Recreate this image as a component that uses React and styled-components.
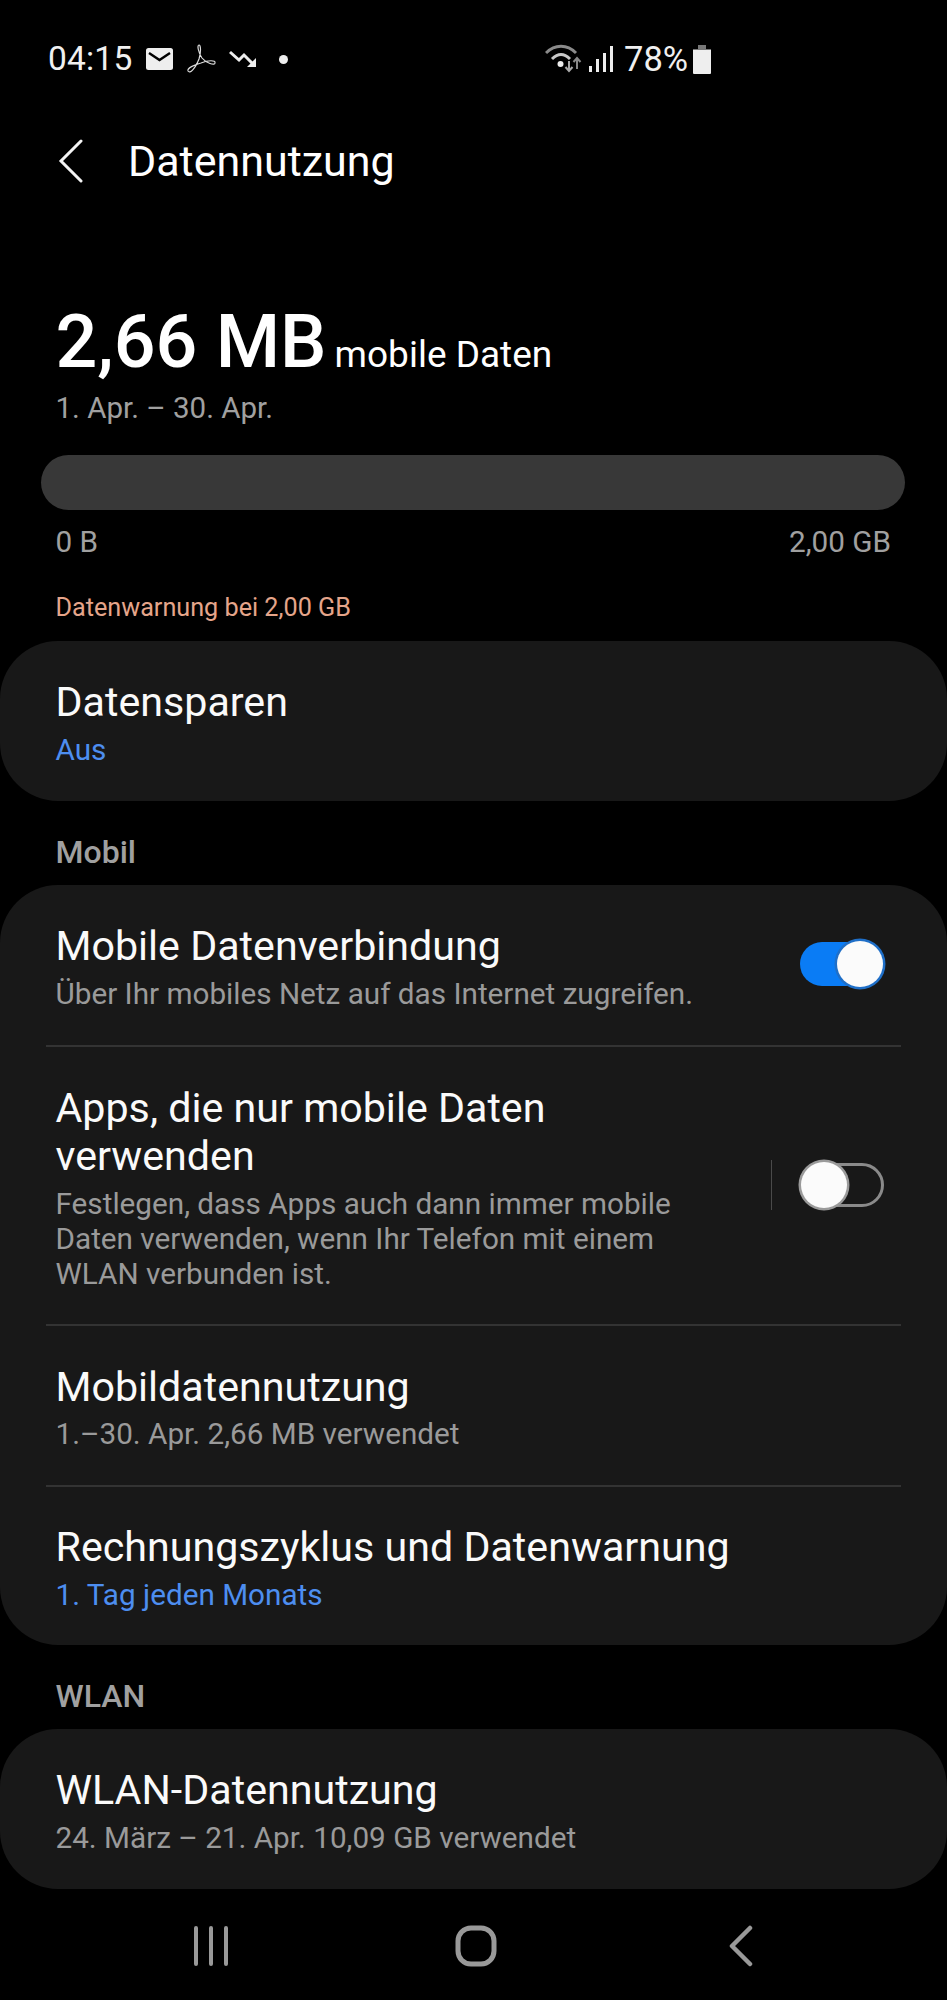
import React from "react";
import styled, { createGlobalStyle } from "styled-components";

const Global = createGlobalStyle`
  html, body { margin: 0; padding: 0; background: #000; }
  body { font-family: Roboto, "Liberation Sans", sans-serif; }
`;

const Page = styled.div`
  width: 947px; height: 2000px; background: #000; color: #fff; overflow: hidden;
  display: flex; flex-direction: column;
`;
const StatusBar = styled.div`
  height: 116px; box-sizing: border-box; padding: 37px 0 0 48px;
  display: flex; align-items: flex-start; font-size: 33.5px; line-height: 44px; color: #f0f0f0;
`;
const StatusLeft = styled.div`display: flex; align-items: center; height: 44px; width: 497px;`;
const StatusRight = styled.div`display: flex; align-items: center; height: 44px; font-size: 34.5px;`;
const Clock = styled.span`margin-right: 13px; letter-spacing: 0.2px;`;
const Header = styled.div`
  height: 90px; display: flex; align-items: center; padding-left: 58px;
`;
const HeaderTitle = styled.h1`
  margin: 0 0 0 44px; font-size: 43px; font-weight: 400; line-height: 56px;
`;
const Summary = styled.div`padding: 92px 55.5px 0; `;
const Amount = styled.div`display: flex; align-items: baseline; gap: 8px; height: 88px;`;
const AmountValue = styled.span`font-size: 73.6px; font-weight: 500; line-height: 88px;`;
const AmountUnit = styled.span`font-size: 37px; line-height: 44px;`;
const Period = styled.div`font-size: 29.5px; line-height: 40px; color: #a0a0a0; margin-top: 2px;`;
const BarTrack = styled.div`
  height: 55px; margin: 27px 42px 0 41px; border-radius: 28px; background: #383838; 
`;
const Scale = styled.div`
  display: flex; justify-content: space-between; padding: 12px 56px 0 55.5px;
  font-size: 29.7px; line-height: 40px; color: #a0a0a0;
`;
const Warning = styled.div`
  padding: 28px 55.5px 0; font-size: 25.2px; line-height: 36px; color: #e5a58a;
`;
const Card = styled.section`
  background: #181818; border-radius: 58px; margin-top: ${(p) => p.$top || 0}px;
  display: flex; flex-direction: column;
`;
const SectionLabel = styled.div`
  padding: 31px 55.5px 0; height: 53px; font-size: 32px; font-weight: 500; line-height: 40px; color: #a0a0a0;
`;
const Row = styled.div`
  height: ${(p) => p.$h}px; box-sizing: border-box; padding: 3px 63px 0 55.5px;
  display: flex; align-items: center; justify-content: space-between;
`;
const RowText = styled.div`display: flex; flex-direction: column;`;
const RowTitle = styled.div`font-size: 41.2px; line-height: 48.5px; color: #fafafa; max-width: ${(p) => p.$max || 900}px;`;
const RowSub = styled.div`
  font-size: 29.7px; line-height: 35px; margin-top: 5px;
  color: ${(p) => (p.$accent ? "#4d8ef0" : "#9a9a9a")}; max-width: ${(p) => p.$max || 900}px;
`;
const Divider = styled.div`height: 2px; margin: 0 46px; background: #333;`;
const SwitchGroup = styled.div`display: flex; align-items: center; margin-bottom: 5px;`;
const Separator = styled.div`width: 1px; height: 50px; background: #4a4a4a; margin-right: 28px;`;
const Track = styled.div`
  position: relative; width: 84px; height: 44px; box-sizing: border-box; border-radius: 22px;
  background: ${(p) => (p.$on ? "#0a7cf5" : "transparent")};
  border: ${(p) => (p.$on ? "none" : "3px solid #8a8a8a")};
`;
const Knob = styled.div`
  position: absolute; top: 50%; transform: translateY(-50%); width: 46px; height: 46px; border-radius: 50%;
  background: #fbfbfb; box-shadow: 0 0 0 2.5px ${(p) => (p.$on ? "#1f6fc8" : "#9a9a9a")};
  ${(p) => (p.$on ? "right: 1px;" : "left: -2px;")}
`;
const NavBar = styled.div`
  flex: 1; display: flex; align-items: center;
  padding: 2px 0 0 186px; gap: 215px;
`;
const NavSlot = styled.div`display: flex; align-items: center; justify-content: center; width: 50px;`;

const Toggle = ({ on }) => (
  <Track $on={on}><Knob $on={on} /></Track>
);

const Mail = () => (
  <svg width="29" height="24" viewBox="0 0 29 24" style={{ marginRight: 12 }}>
    <rect x="1" y="1" width="27" height="22" rx="2.5" fill="#eee" />
    <path d="M4 6l10.5 7L25 6" fill="none" stroke="#000" strokeWidth="2.4" />
  </svg>
);
const Acrobat = () => (
  <svg width="32" height="30" viewBox="0 0 32 30" style={{ marginRight: 11 }}>
    <path d="M2 27C4 30 9 25 13 15C15 9 15 1 13 1C11 1 12 8 16 14C20 19 29 22 29 19C30 16 22 16 15 19C8 21 1 24 2 27z" fill="none" stroke="#ddd" strokeWidth="1.2" />
  </svg>
);
const TrendDown = () => (
  <svg width="28" height="20" viewBox="0 0 28 20" style={{ marginRight: 22 }}>
    <path d="M1 3l9 8 5-5 10 10" fill="none" stroke="#eee" strokeWidth="3" />
    <path d="M18 18h9v-9z" fill="#eee" />
  </svg>
);
const Dot = styled.span`width: 9px; height: 9px; border-radius: 50%; background: #eee;`;
const Wifi = () => (
  <svg width="37" height="30" viewBox="0 0 37 30" style={{ marginRight: 6 }}>
    <path d="M1 9C10 0 22 0 31 9" fill="none" stroke="#8a8a8a" strokeWidth="3" />
    <path d="M7 15C13 9 19 9 25 15" fill="none" stroke="#c8c8c8" strokeWidth="3" />
    <circle cx="15.500" cy="20" r="3" fill="#eee" />
    <path d="M24 17v9M20.5 23l3.5 4 3.5-4" fill="none" stroke="#aaa" strokeWidth="2" />
    <path d="M32 25v-10M28.5 18l3.5-4 3.500 4" fill="none" stroke="#888" strokeWidth="2" />
  </svg>
);
const Signal = () => (
  <svg width="26" height="28" viewBox="0 0 26 28" style={{ marginRight: 10 }}>
    <rect x="1" y="21" width="3" height="6" fill="#eee" />
    <rect x="8" y="14" width="3" height="13" fill="#eee" />
    <rect x="15" y="8" width="3" height="19" fill="#eee" />
    <rect x="22" y="1" width="3" height="26" fill="#eee" />
  </svg>
);
const Battery = () => (
  <svg width="20" height="30" viewBox="0 0 20 30" style={{ marginLeft: 4 }}>
    <path d="M6 1h8v4h5v5H1V5h5z" fill="#777" />
    <path d="M1 6h18v23a1 1 0 0 1-1 1H2a1 1 0 0 1-1-1z" fill="#eee" />
  </svg>
);
const BackChevron = () => (
  <svg width="26" height="44" viewBox="0 0 26 44">
    <path d="M23 2L3 22l20 20" fill="none" stroke="#f4f4f4" strokeWidth="3" strokeLinecap="round" />
  </svg>
);

export default function App() {
  return (
    <Page>
      <Global />
      <StatusBar>
        <StatusLeft>
          <Clock>04:15</Clock>
          <Mail /><Acrobat /><TrendDown /><Dot />
        </StatusLeft>
        <StatusRight>
          <Wifi /><Signal /><span>78%</span><Battery />
        </StatusRight>
      </StatusBar>
      <Header>
        <BackChevron />
        <HeaderTitle>Datennutzung</HeaderTitle>
      </Header>
      <Summary>
        <Amount>
          <AmountValue>2,66 MB</AmountValue>
          <AmountUnit>mobile Daten</AmountUnit>
        </Amount>
        <Period>1. Apr. – 30. Apr.</Period>
      </Summary>
      <BarTrack />
      <Scale><span>0 B</span><span>2,00 GB</span></Scale>
      <Warning>Datenwarnung bei 2,00 GB</Warning>
      <Card $top={15}>
        <Row $h={160}>
          <RowText>
            <RowTitle>Datensparen</RowTitle>
            <RowSub $accent>Aus</RowSub>
          </RowText>
        </Row>
      </Card>
      <SectionLabel>Mobil</SectionLabel>
      <Card>
        <Row $h={160}>
          <RowText>
            <RowTitle>Mobile Datenverbindung</RowTitle>
            <RowSub>Über Ihr mobiles Netz auf das Internet zugreifen.</RowSub>
          </RowText>
          <SwitchGroup><Toggle on /></SwitchGroup>
        </Row>
        <Divider />
        <Row $h={277}>
          <RowText>
            <RowTitle $max={640}>Apps, die nur mobile Daten verwenden</RowTitle>
            <RowSub $max={640}>Festlegen, dass Apps auch dann immer mobile Daten verwenden, wenn Ihr Telefon mit einem WLAN verbunden ist.</RowSub>
          </RowText>
          <SwitchGroup>
            <Separator />
            <Toggle />
          </SwitchGroup>
        </Row>
        <Divider />
        <Row $h={159}>
          <RowText>
            <RowTitle>Mobildatennutzung</RowTitle>
            <RowSub>1.–30. Apr. 2,66 MB verwendet</RowSub>
          </RowText>
        </Row>
        <Divider />
        <Row $h={158}>
          <RowText>
            <RowTitle>Rechnungszyklus und Datenwarnung</RowTitle>
            <RowSub $accent>1. Tag jeden Monats</RowSub>
          </RowText>
        </Row>
      </Card>
      <SectionLabel>WLAN</SectionLabel>
      <Card>
        <Row $h={160}>
          <RowText>
            <RowTitle>WLAN-Datennutzung</RowTitle>
            <RowSub>24. März – 21. Apr. 10,09 GB verwendet</RowSub>
          </RowText>
        </Row>
      </Card>
      <NavBar>
        <NavSlot>
          <svg width="38" height="40" viewBox="0 0 38 40"><path d="M4 2v36M19 2v36M34 2v36" stroke="#999" strokeWidth="4" strokeLinecap="round" /></svg>
        </NavSlot>
        <NavSlot>
          <svg width="42" height="42" viewBox="0 0 42 42"><rect x="3" y="3" width="36" height="36" rx="13" fill="none" stroke="#999" strokeWidth="5" /></svg>
        </NavSlot>
        <NavSlot>
          <svg width="26" height="42" viewBox="0 0 26 42"><path d="M22 3L4 21l18 18" fill="none" stroke="#999" strokeWidth="4.5" strokeLinecap="round" strokeLinejoin="round" /></svg>
        </NavSlot>
      </NavBar>
    </Page>
  );
}
